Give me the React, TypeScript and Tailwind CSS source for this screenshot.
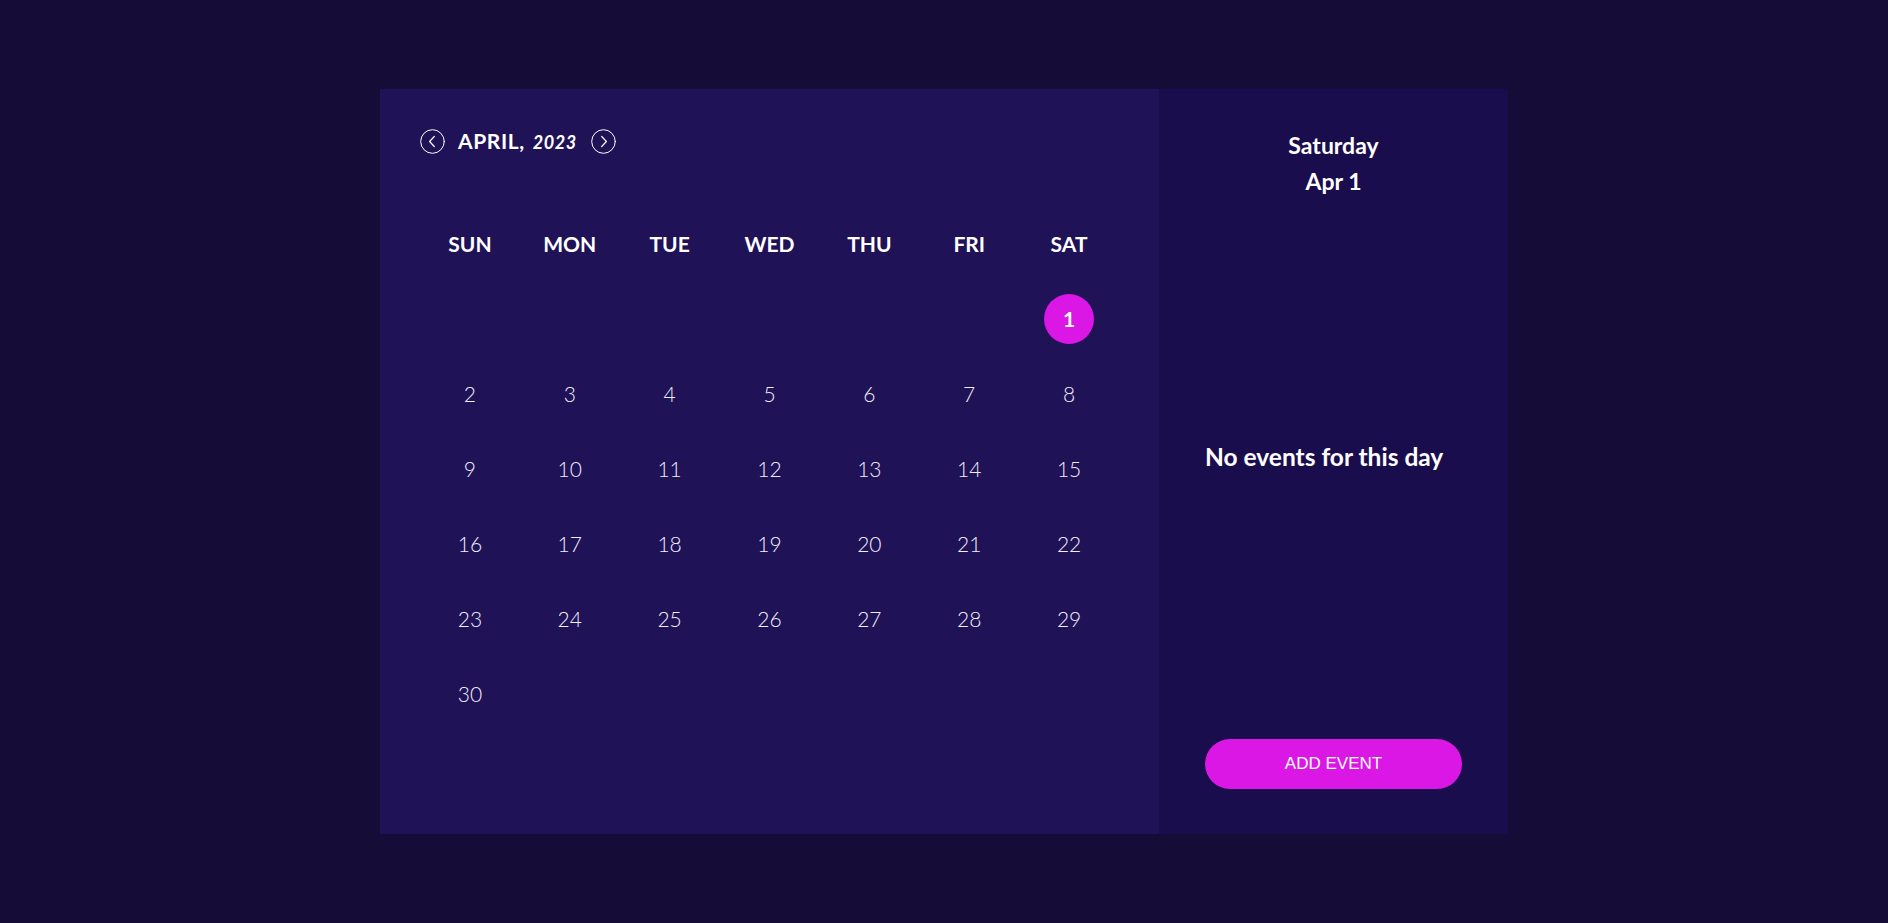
import { useState } from "react";

const DIAS = ["SUN", "MON", "TUE", "WED", "THU", "FRI", "SAT"];

// abril 2023 empieza en sábado
const CELDAS: (number | null)[] = [
  ...Array(6).fill(null),
  ...Array.from({ length: 30 }, (_, i) => i + 1),
];

function Flecha({ dir }: { dir: "izq" | "der" }) {
  return (
    <svg width="25" height="25" viewBox="0 0 25 25" fill="none" stroke="white" strokeLinecap="round" strokeLinejoin="round">
      <circle cx="12.5" cy="12.5" r="11.8" strokeWidth="1" />
      {dir === "izq" ? (
        <path d="M14.3 7.5 L9.6 12.5 L14.3 17.5" strokeWidth="1.2" />
      ) : (
        <path d="M10.7 7.5 L15.4 12.5 L10.7 17.5" strokeWidth="1.2" />
      )}
    </svg>
  );
}

export default function App() {
  const [seleccionado, setSeleccionado] = useState(1);

  return (
    <div
      className="flex h-screen min-h-[923px] w-full items-center justify-center bg-[#150d37]"
      style={{ fontFamily: "Lato, 'Open Sans', sans-serif" }}
    >
      <div className="flex h-[745px] w-[1128px]">
        {/* calendario */}
        <div className="w-[779px] bg-[#1f1257] px-10 pt-[37px] text-white">
          <div className="flex h-[30px] items-center">
            <button className="flex h-[25px] w-[25px] items-center justify-center">
              <Flecha dir="izq" />
            </button>
            <div className="ml-[13px] flex items-baseline font-bold tracking-[0.6px]">
              <span className="text-[21px]">APRIL,</span>
              <span className="ml-[8px] text-[18px] italic">2023</span>
            </div>
            <button className="ml-[14px] flex h-[25px] w-[25px] items-center justify-center">
              <Flecha dir="der" />
            </button>
          </div>

          <div className="mt-[50px] grid grid-cols-7">
            {DIAS.map((d) => (
              <div key={d} className="flex h-[75px] items-center justify-center text-[21px] font-bold">
                {d}
              </div>
            ))}
            {CELDAS.map((n, i) => (
              <div key={i} className="flex h-[75px] items-center justify-center">
                {n !== null &&
                  (n === seleccionado ? (
                    <button className="flex h-[50px] w-[50px] items-center justify-center rounded-full bg-[#db17e6] text-[21px] font-bold text-white">
                      {n}
                    </button>
                  ) : (
                    <button
                      onClick={() => setSeleccionado(n)}
                      className="text-[21px] font-light text-[#f1eef9]"
                    >
                      {n}
                    </button>
                  ))}
              </div>
            ))}
          </div>
        </div>

        {/* panel del día */}
        <div className="flex w-[349px] flex-col bg-[#1a0d4e] px-[46px] pb-[45px] pt-[38px] text-white">
          <div className="text-center text-[23px] font-bold leading-[36px]">
            <div>Saturday</div>
            <div>Apr {seleccionado}</div>
          </div>
          <p className="mt-[243px] text-[24.5px] font-bold leading-[30px]">No events for this day</p>
          <button
            className="mt-auto h-[50px] w-full rounded-full bg-[#db17e6] text-[17px] text-white"
            style={{ fontFamily: "'Liberation Sans', Arial, sans-serif" }}
          >
            ADD EVENT
          </button>
        </div>
      </div>
    </div>
  );
}
